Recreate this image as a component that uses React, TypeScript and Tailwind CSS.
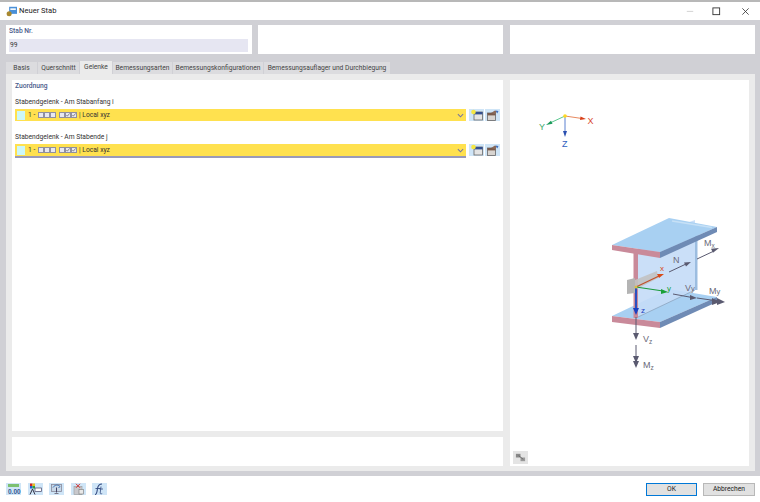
import React from "react";

const Tab = ({ label, w, active }: { label: string; w: string; active?: boolean }) => (
  <div className={`${w} flex items-center justify-center text-[6.7px] leading-none text-[#444] ${active ? "bg-[#ebebeb] h-[13px]" : "bg-[#dcdcdf] h-[12px]"}`}>
    {label}
  </div>
);

const Box = ({ checked }: { checked?: boolean }) => (
  <span className="inline-block w-[4px] h-[4px] border border-[#9090a0] bg-[#e8e8f0] relative box-content">
    {checked && (
      <svg viewBox="0 0 5 5" className="absolute inset-0 w-full h-full">
        <path d="M.5 2.5l1.2 1.5L4.5 .5" stroke="#555" strokeWidth="0.8" fill="none" />
      </svg>
    )}
  </span>
);

const WinNew = () => (
  <svg viewBox="0 0 15 12" className="w-[15px] h-[12px]">
    <rect x="5" y="3" width="8.5" height="8" fill="#e4e4e4" stroke="#666" strokeWidth="0.8" />
    <rect x="5" y="3" width="8.5" height="2.4" fill="#34508f" />
    <circle cx="4.5" cy="3" r="2.3" fill="#f5e642" />
  </svg>
);

const WinCopy = () => (
  <svg viewBox="0 0 15 12" className="w-[15px] h-[12px]">
    <rect x="2.5" y="4" width="8" height="7.5" fill="#d8d4d0" stroke="#666" strokeWidth="0.8" />
    <rect x="2.5" y="4" width="8" height="2.4" fill="#7a5a4a" />
    <path d="M6 4l4-2.5 2 1-2 2.5z" fill="#8a6a5a" />
    <path d="M10.5 1.5l3 .5-1.2 2.5z" fill="#3f6fc0" />
  </svg>
);

const Select = ({ underline }: { underline?: boolean }) => (
  <div className="flex items-start">
    <div className={`w-[447px] h-[12px] bg-[#ffe14f] flex items-center pl-[2px] pr-[2px] box-content ${underline ? "border-b-[2px] border-[#9a9ab8]" : ""}`}>
      <span className="w-[8px] h-[9px] bg-[#ccf7f9] mr-[3px]" />
      <span className="text-[6.7px] text-[#333] mr-[2px] leading-none w-[8px]">1 -</span>
      <Box /><Box /><Box />
      <span className="w-[3px]" />
      <Box /><Box checked /><Box checked />
      <span className="text-[6.7px] text-[#333] leading-none ml-[2px]">| Local xyz</span>
      <svg viewBox="0 0 8 8" className="ml-auto w-[7px] h-[7px]">
        <path d="M1 2.5l3 3 3-3" stroke="#7777a0" strokeWidth="1.2" fill="none" />
      </svg>
    </div>
    <div className="w-[15px] h-[12px] bg-[#cfe5f7] ml-[3px]"><WinNew /></div>
    <div className="w-[15px] h-[12px] bg-[#cfe5f7] ml-[1px]"><WinCopy /></div>
  </div>
);

const ToolBtn = ({ children }: { children: React.ReactNode }) => (
  <div className="w-[15px] h-[12px] bg-[#cfe5f7] flex items-center justify-center">{children}</div>
);

const Axes = () => (
  <svg viewBox="0 0 80 60" className="w-[80px] h-[60px]" fontFamily="Liberation Sans">
    <path d="M35 16L20 23" stroke="#5cc890" strokeWidth="1" />
    <path d="M16 25l5-4.2 1.5 3z" fill="#1a9a5a" />
    <path d="M35 16L52 18.5" stroke="#e88a60" strokeWidth="1" />
    <path d="M56 19l-5.5-2.5-.5 3.5z" fill="#d8401a" />
    <path d="M35 16V33" stroke="#5a80d0" strokeWidth="1" />
    <path d="M35 37l-2-6h4z" fill="#2a50b0" />
    <circle cx="35" cy="16" r="1.8" fill="#ffd820" />
    <text x="9" y="29.5" fontSize="9" fill="#3aa86a">Y</text>
    <text x="57.5" y="23.5" fontSize="9" fill="#d84a30">X</text>
    <text x="32" y="47" fontSize="9" fill="#3060c0">Z</text>
  </svg>
);

const Beam = () => (
  <svg viewBox="0 0 130 170" className="w-[130px] h-[170px]" fontFamily="Liberation Sans">
    {/* bottom flange */}
    <path d="M12 106L69 79L117 87L60 112z" fill="#a8d0f2" />
    <path d="M12 106L60 112V118L12 112z" fill="#c98a9a" />
    <path d="M60 112L117 87V92L60 118z" fill="#6f8bb5" />
    {/* web */}
    <path d="M38 30L95 10V80L38 107z" fill="#c4dcf7" opacity="0.9" />
    <path d="M95 18h2.5V80H95z" fill="#9cbde0" />
    <path d="M38 107L95 80" stroke="#7f93ad" strokeWidth="0.6" />
    {/* top flange */}
    <path d="M12 35L69 8L117 17L60 42z" fill="#a8d0f2" />
    <path d="M72 11L112 17.5" stroke="#c6e0f6" strokeWidth="1.5" />
    <path d="M12 35L60 42V48L12 40z" fill="#c98a9a" />
    <path d="M60 42L117 17V22L60 48z" fill="#6f8bb5" />
    {/* web end */}
    <rect x="33.5" y="40" width="4.5" height="68" fill="#c98a9a" />
    {/* plate */}
    <path d="M27 70l8-2v15l-8 1z" fill="#b4b4b4" />
    <path d="M35 70l22-9 1 7-23 12z" fill="#c2c2c2" opacity="0.9" />
    {/* force arrows */}
    <g stroke="#5a5a70" strokeWidth="1" fill="#5a5a70">
      <path d="M69 62L86 54" />
      <path d="M91 52l-7 .5 2 4z" stroke="none" />
      <path d="M97 49L114 41" />
      <path d="M119 38l-8 .8 2 4z" stroke="none" />
      <path d="M73 84L92 87.5" />
      <path d="M97 88l-7-3v5z" stroke="none" />
      <path d="M97 88L118 91" />
      <path d="M125 92l-8-4v7zM120 92l-8-4v7z" stroke="none" />
      <path d="M36 107V125" />
      <path d="M36 130l-3-7h6z" stroke="none" />
      <path d="M36 135V150" />
      <path d="M36 158l-3-7h6zM36 153l-3-7h6z" stroke="none" />
    </g>
    {/* local axes */}
    <path d="M36 77L59 66" stroke="#c0502a" strokeWidth="1.2" />
    <path d="M64 64l-7 0 2 4z" fill="#d84a18" />
    <text x="60" y="61" fontSize="8" fill="#d84a18">x</text>
    <path d="M36 77L63 81" stroke="#1a9a3a" strokeWidth="1.2" />
    <path d="M68 82l-7-3v5z" fill="#18a038" />
    <text x="67" y="81" fontSize="8" fill="#18a038">y</text>
    <path d="M36 77V100" stroke="#2a50c0" strokeWidth="2" />
    <path d="M36 105l-3-7h6z" fill="#1a40c0" />
    <text x="41" y="103" fontSize="8" fill="#1a40c0">z</text>
    <circle cx="36" cy="77" r="1.5" fill="#d8c040" />
    <g fill="#6a6a78" fontSize="9">
      <text x="73" y="53">N</text>
      <text x="104" y="36">M<tspan fontSize="6.5" dy="1.5">x</tspan></text>
      <text x="85" y="81">V<tspan fontSize="7.5" dy="0">y</tspan></text>
      <text x="109" y="84">M<tspan fontSize="7.5" dy="0">y</tspan></text>
      <text x="43" y="132">V<tspan fontSize="6.5" dy="2">z</tspan></text>
      <text x="43" y="158">M<tspan fontSize="6.5" dy="2">z</tspan></text>
    </g>
  </svg>
);

export default function App() {
  return (
    <div className="w-[760px] h-[502px] bg-white flex flex-col overflow-hidden border-t-2 border-[#b8b8b8] font-['Roboto','Open_Sans',sans-serif]">
      {/* title bar */}
      <div className="h-[18px] flex items-center shrink-0 pl-[6px]">
        <svg viewBox="0 0 14 14" className="w-[11px] h-[11px] mr-[2px]">
          <rect x="4" y="1" width="10" height="9" fill="#4a90d8" />
          <rect x="5.5" y="3" width="7" height="2" fill="#fff" />
          <circle cx="4" cy="10" r="3.2" fill="#a88830" />
        </svg>
        <span className="text-[7.6px] text-[#222]">Neuer Stab</span>
        <div className="ml-auto flex items-center">
          <svg viewBox="0 0 10 10" className="w-[8px] h-[8px] mr-[18px]"><path d="M1 5.5h8" stroke="#c8c8c8" /></svg>
          <svg viewBox="0 0 10 10" className="w-[9px] h-[9px] mr-[20px]"><rect x="1" y="1" width="7.5" height="7.5" fill="none" stroke="#333" /></svg>
          <svg viewBox="0 0 10 10" className="w-[9px] h-[9px] mr-[10px]"><path d="M1.5 1.5l7 7M8.5 1.5l-7 7" stroke="#333" strokeWidth="0.9" /></svg>
        </div>
      </div>

      {/* main */}
      <div className="h-[456px] shrink-0 bg-[#d0d0d5] pl-[6px] pr-[5px] pt-[5px] pb-[5px] flex flex-col">
        <div className="flex h-[29px] shrink-0">
          <div className="w-[246px] bg-white pl-[3px] pt-[1px]">
            <div className="text-[6.7px] leading-[10px] font-medium text-[#4a5a8a]">Stab Nr.</div>
            <div className="mt-[3px] h-[13px] w-[239px] bg-[#e6e6f2] text-[6.7px] leading-[13px] text-[#333] pl-[1px]">99</div>
          </div>
          <div className="w-[245px] ml-[6px] bg-white" />
          <div className="w-[245px] ml-[7px] bg-white" />
        </div>
        <div className="flex items-end mt-[7px] h-[13px] shrink-0 gap-px">
          <Tab label="Basis" w="w-[31px]" />
          <Tab label="Querschnitt" w="w-[41px]" />
          <Tab label="Gelenke" w="w-[32px]" active />
          <Tab label="Bemessungsarten" w="w-[59px]" />
          <Tab label="Bemessungskonfigurationen" w="w-[90px]" />
          <Tab label="Bemessungsauflager und Durchbiegung" w="w-[126px]" />
        </div>
        <div className="flex-1 min-h-0 bg-[#ebebeb] pl-[6px] pr-[6px] pt-[6px] pb-[5px] flex gap-[7px]">
          <div className="w-[491px] flex flex-col gap-[6px]">
            <div className="flex-1 bg-white pl-[3px] pt-[1px]">
              <div className="text-[6.7px] leading-[10px] font-medium text-[#4a5a8a]">Zuordnung</div>
              <div className="text-[6.7px] leading-[10px] text-[#333] mt-[6px]">Stabendgelenk - Am Stabanfang i</div>
              <div className="mt-[2px]"><Select /></div>
              <div className="text-[6.7px] leading-[10px] text-[#333] mt-[11px]">Stabendgelenk - Am Stabende j</div>
              <div className="mt-[2px]"><Select underline /></div>
            </div>
            <div className="h-[29px] bg-white shrink-0" />
          </div>
          <div className="flex-1 bg-white relative">
            <div className="absolute left-[20px] top-[20px]"><Axes /></div>
            <div className="absolute left-[90px] top-[130px]"><Beam /></div>
            <div className="absolute left-[3px] bottom-[2px] w-[15px] h-[13px] bg-[#e4e4e4] flex items-center justify-center">
              <svg viewBox="0 0 12 12" className="w-[11px] h-[11px]">
                <rect x="1" y="2" width="5" height="4" fill="#888" />
                <rect x="6" y="6" width="5" height="4" fill="#999" />
                <path d="M4 4l5 4" stroke="#666" />
              </svg>
            </div>
          </div>
        </div>
      </div>

      {/* footer */}
      <div className="flex-1 flex items-center pl-[6px] pr-[5px] relative">
        <div className="flex gap-[6.5px]">
          <ToolBtn>
            <svg viewBox="0 0 15 12" className="w-[15px] h-[12px]">
              <rect x="2" y="1" width="11" height="3" fill="#7cc070" />
              <text x="2" y="10.5" fontSize="6.5" fill="#345a90" fontFamily="Liberation Sans" fontWeight="700">0.00</text>
            </svg>
          </ToolBtn>
          <ToolBtn>
            <svg viewBox="0 0 15 12" className="w-[15px] h-[12px]">
              <rect x="2" y=".5" width="2.5" height="2.5" fill="#d02020" />
              <rect x="4.5" y=".5" width="2.5" height="2.5" fill="#e8c020" />
              <rect x="2" y="3" width="2.5" height="2.5" fill="#2060d0" />
              <rect x="4.5" y="3" width="2.5" height="2.5" fill="#30a040" />
              <rect x="7" y="5" width="6.5" height="3.5" fill="#fff" stroke="#446" strokeWidth="0.7" />
              <path d="M2 11.5l2.5-5.5L7 11.5" fill="none" stroke="#334" strokeWidth="1" />
            </svg>
          </ToolBtn>
          <ToolBtn>
            <svg viewBox="0 0 15 12" className="w-[15px] h-[12px]">
              <rect x="2.5" y="1.5" width="10" height="7" fill="#c8d8e8" stroke="#889" strokeWidth="0.8" />
              <path d="M4 4.5c2-3 5-3 7-1l-1.5 1.5" stroke="#3a70b0" fill="none" />
              <path d="M7.5 4.5v5" stroke="#446" />
              <path d="M5.5 10.5h4" stroke="#778" />
            </svg>
          </ToolBtn>
          <ToolBtn>
            <svg viewBox="0 0 15 12" className="w-[15px] h-[12px]">
              <rect x="3" y="3.5" width="8" height="8" fill="#c8c8cc" stroke="#999" strokeWidth="0.6" />
              <path d="M5 .8l4 4M9 .8L5 4.8" stroke="#d03030" />
              <rect x="8" y="6.5" width="4.5" height="4.5" fill="#e8e8e8" stroke="#777" strokeWidth="0.6" />
            </svg>
          </ToolBtn>
          <ToolBtn>
            <svg viewBox="0 0 15 12" className="w-[15px] h-[12px]">
              <path d="M3 11.5c2 0 2-3 2.5-6S7 1 10 1" stroke="#334a80" strokeWidth="1.1" fill="none" />
              <path d="M3.5 5.5h5" stroke="#334a80" strokeWidth="0.9" />
              <path d="M9 3.5l-.8 6.5c0 1 1 1 2 .5M7.5 6h3.5" stroke="#334a80" strokeWidth="0.8" fill="none" />
            </svg>
          </ToolBtn>
        </div>
        <div className="ml-auto flex gap-[6px]">
          <div className="w-[51px] h-[13px] bg-[#e1e1e1] border-[1.5px] border-[#0078d7] text-[6.7px] leading-[10px] text-center text-[#222]">OK</div>
          <div className="w-[52px] h-[13px] bg-[#e1e1e1] border border-[#b8b8b8] text-[6.7px] leading-[11px] text-center text-[#222]">Abbrechen</div>
        </div>
      </div>
    </div>
  );
}
